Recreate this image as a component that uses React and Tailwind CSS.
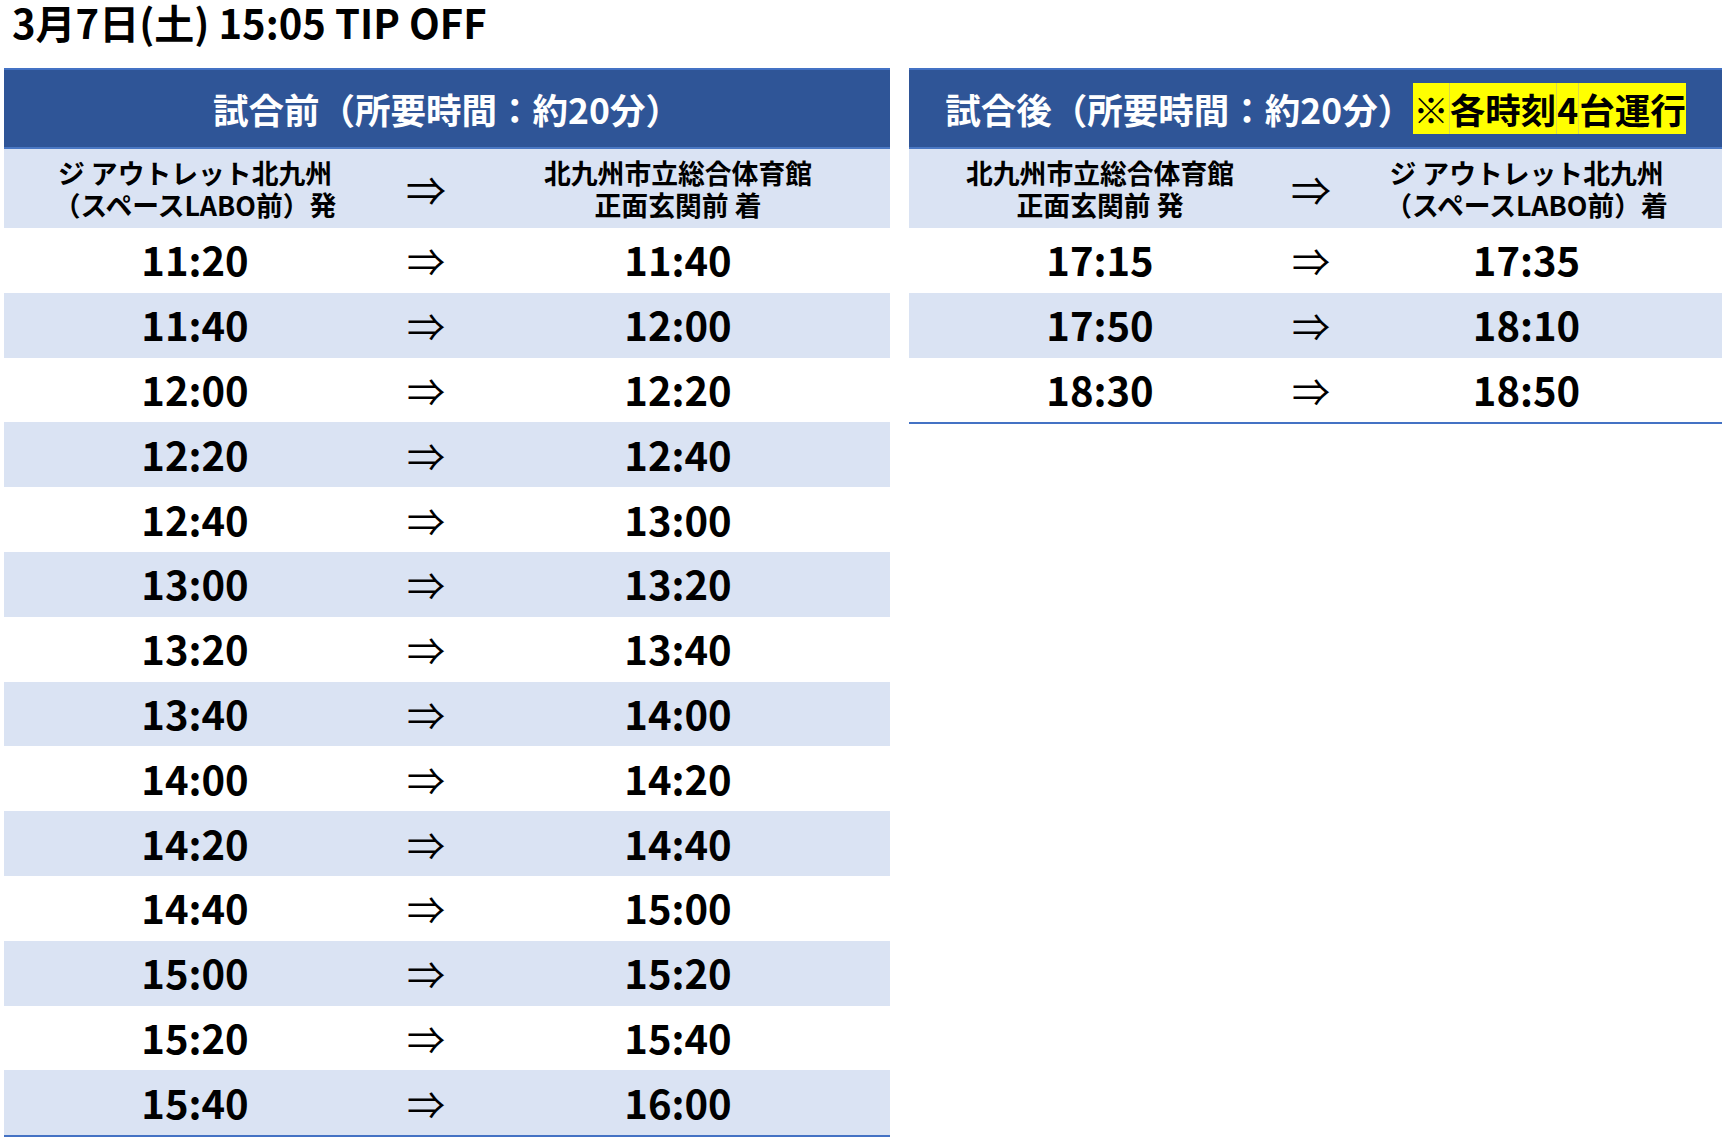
import React from "react";

const leftRows = [
  ["11:20", "11:40"],
  ["11:40", "12:00"],
  ["12:00", "12:20"],
  ["12:20", "12:40"],
  ["12:40", "13:00"],
  ["13:00", "13:20"],
  ["13:20", "13:40"],
  ["13:40", "14:00"],
  ["14:00", "14:20"],
  ["14:20", "14:40"],
  ["14:40", "15:00"],
  ["15:00", "15:20"],
  ["15:20", "15:40"],
  ["15:40", "16:00"],
];

const rightRows = [
  ["17:15", "17:35"],
  ["17:50", "18:10"],
  ["18:30", "18:50"],
];

function Arrow({ big }) {
  return (
    <span className={big ? "text-[40px] font-normal leading-none" : "text-[38px] font-normal leading-none"}>⇒</span>
  );
}

function Table({ width, c1, c2, header, sub1, sub2, rows }) {
  return (
    <div className="flex flex-col" style={{ width }}>
      <div className="h-[81px] bg-[#2f5597] border-t-2 border-t-[#4472c4] border-b-2 border-b-[#4a78c4] flex items-center justify-center text-white text-[35.5px] font-bold leading-[51px] whitespace-nowrap">
        {header}
      </div>
      <div className="h-[79px] bg-[#dae3f3] flex items-center text-[26.8px] font-bold leading-[32px] text-black">
        <div className="flex flex-col items-center justify-center text-center whitespace-nowrap" style={{ width: c1 }}>
          {sub1}
        </div>
        <div className="flex items-center justify-center" style={{ width: c2 }}>
          <Arrow big />
        </div>
        <div className="flex-1 flex flex-col items-center justify-center text-center whitespace-nowrap">
          {sub2}
        </div>
      </div>
      {rows.map(([a, b], i) => (
        <div
          key={i}
          className={
            "h-[64.8px] flex items-center text-black " +
            (i % 2 === 1 ? "bg-[#dae3f3]" : "bg-white")
          }
        >
          <div className="flex items-center justify-center text-[40px] font-bold leading-none -mt-[2px]" style={{ width: c1 }}>
            {a}
          </div>
          <div className="flex items-center justify-center" style={{ width: c2 }}>
            <Arrow />
          </div>
          <div className="flex-1 flex items-center justify-center text-[40px] font-bold leading-none -mt-[2px]">
            {b}
          </div>
        </div>
      ))}
      <div className="h-[2px] bg-[#4472c4]" />
    </div>
  );
}

export default function App() {
  return (
    <div className="w-[1728px] h-[1144px] bg-white overflow-hidden font-['Noto_Sans_CJK_JP',sans-serif] text-black">
      <div className="pl-[12px] h-[44px] leading-[44px] text-[40px] font-bold whitespace-nowrap">
        3月7日(土) 15:05 TIP OFF
      </div>
      <div className="mt-[24px] flex items-start">
        <div className="ml-[4px]">
          <Table
            width={886}
            c1={382}
            c2={80}
            header={<span>試合前（所要時間：約20分）</span>}
            sub1={
              <>
                <span>ジ アウトレット北九州</span>
                <span>（スペースLABO前）発</span>
              </>
            }
            sub2={
              <>
                <span>北九州市立総合体育館</span>
                <span>正面玄関前 着</span>
              </>
            }
            rows={leftRows}
          />
        </div>
        <div className="ml-[19px]">
          <Table
            width={813}
            c1={382}
            c2={40}
            header={
              <span>
                試合後（所要時間：約20分）
                <span className="bg-[#ffff00] text-black">
                  <span>※</span>
                  <span className="border-l border-l-[#d8d84a]">各時刻</span>
                  <span className="border-l border-l-[#d8d84a]">4</span>
                  <span className="border-l border-l-[#d8d84a]">台運行</span>
                </span>
              </span>
            }
            sub1={
              <>
                <span>北九州市立総合体育館</span>
                <span>正面玄関前 発</span>
              </>
            }
            sub2={
              <>
                <span>ジ アウトレット北九州</span>
                <span>（スペースLABO前）着</span>
              </>
            }
            rows={rightRows}
          />
        </div>
      </div>
    </div>
  );
}
